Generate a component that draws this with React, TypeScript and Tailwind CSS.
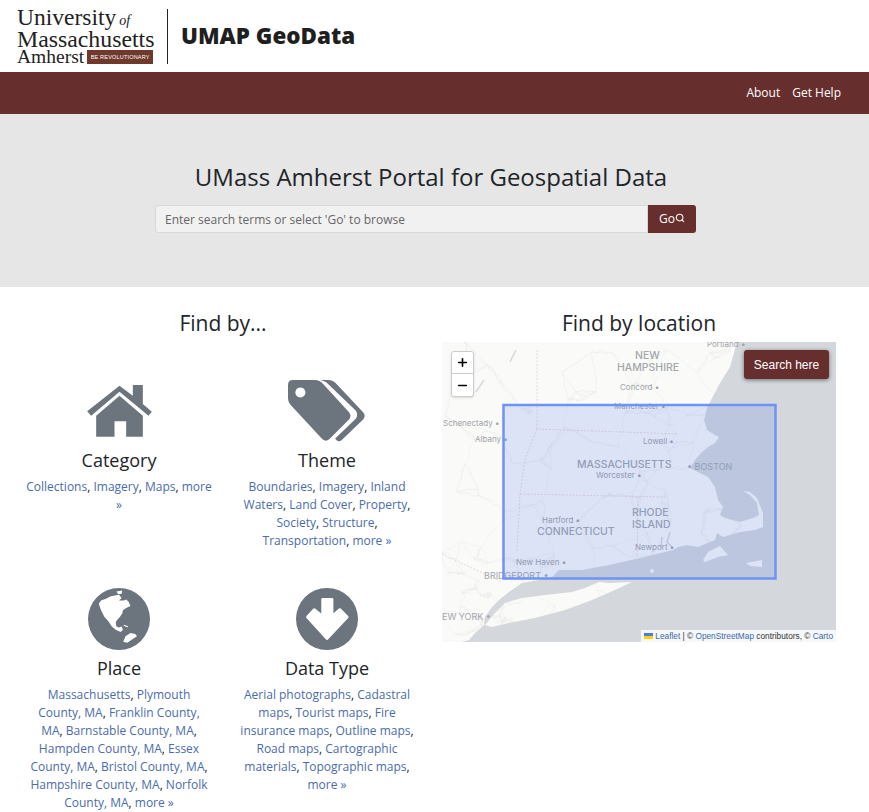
import { Search, Plus, Minus } from 'lucide-react'

const SANS = "font-['Open_Sans',sans-serif]"

const COAST =
  'M0 0H295L288 25 278 41 269 58 265 66 262 78 265 88 273 93 277 95 273 101 266 105 260 110 253 118 248 126 256 130 266 135 273 145 276 158 281 165 278 173 283 176 298 180 311 176 317 173 315 161 308 153 301 149 308 150 315 156 321 171 321 185 313 188 298 190 281 195 275 191 273 198 256 205 245 203 236 205 231 208 198 216 167 223 140 228 117 228 110 235 97 238 80 241 67 250 57 258 50 265 43 275 42 283 33 291 27 298 20 300H0Z'
const LONG_ISLAND =
  'M190 240 167 241 157 240 143 246 130 250 103 253 80 256 63 261 53 271 43 283 50 285 67 281 93 276 123 268 150 258 173 248Z'

// cities the road lines run between, in map coordinates
const HUBS = [
  [248, 126], [197, 135], [135, 180], [225, 175], [110, 222], [33, 98], [160, 155], [225, 65],
  [212, 46], [290, 2], [40, 280], [235, 100], [78, 236], [15, 82], [150, 100], [100, 120],
  [60, 40], [120, 30], [170, 10], [60, 180], [20, 200], [20, 250], [262, 170], [300, 184],
  [190, 215], [90, 70], [255, 30], [15, 150], [60, 280], [110, 262], [155, 248],
]

function buildRoads() {
  let seed = 7
  const rnd = () => {
    seed = (seed * 16807) % 2147483647
    return seed / 2147483647
  }
  const hubs = [...HUBS]
  for (let i = 0; i < 110; i++) hubs.push([Math.round(rnd() * 300), Math.round(rnd() * 300)])
  // new york area is much denser
  for (let i = 0; i < 40; i++) hubs.push([Math.round(rnd() * 90), Math.round(210 + rnd() * 90)])

  const out: string[] = []
  hubs.forEach(([ax, ay], i) => {
    const near = hubs
      .map(([x, y], j) => ({ x, y, j, d: Math.hypot(x - ax, y - ay) }))
      .filter((h) => h.j !== i)
      .sort((a, b) => a.d - b.d)
      .slice(0, 3)
    near.forEach((h) => {
      let d = `M${ax} ${ay}`
      for (let s = 1; s <= 4; s++) {
        const t = s / 4
        const jitter = s === 4 ? 0 : 4
        d += `L${(ax + (h.x - ax) * t + (rnd() - 0.5) * jitter).toFixed(1)} ${(ay + (h.y - ay) * t + (rnd() - 0.5) * jitter).toFixed(1)}`
      }
      out.push(d)
    })
  })
  return out
}

const ROADS = buildRoads()

function HomeIcon() {
  return (
    <svg viewBox="78 48 194 156" className="h-[52px] w-[65px] fill-[#6c757d]">
      <path d="M78 127 175 50 215 80V48h30v57l27 23-10 12-87-72-85 72z" />
      <path d="M175 80 245 140V203H195V157H160V203H105V140z" />
    </svg>
  )
}

function TagsIcon() {
  return (
    <svg viewBox="685 33 233 185" className="h-[62px] w-[78px] fill-[#6c757d]">
      <path
        fillRule="evenodd"
        d="M700 33H765Q780 33 790 45L868 130Q875 140 868 150L808 210Q798 218 788 210L695 110Q685 100 685 85V48Q685 33 700 33ZM722 55a15 15 0 1 0 .01 0Z"
      />
      <path d="M782 33H805Q820 33 830 45L910 130Q918 140 910 150L845 213Q838 218 830 213L826 208 888 148Q895 138 888 125L800 40Q792 35 782 33Z" />
    </svg>
  )
}

function GlobeIcon() {
  return (
    <svg viewBox="5 7 190 190" className="h-[62px] w-[62px]">
      <circle cx="100" cy="102" r="95" className="fill-[#6c757d]" />
      <g className="fill-white">
        <path d="M38 55 45 45 60 40 75 32 100 28 108 38 100 45 115 45 122 42 130 50 135 62 122 68 112 75 110 85 102 97 94 105 90 112 92 125 100 128 108 125 112 135 105 142 90 135 78 125 68 110 55 95 45 75Z" />
        <path d="M113 172 120 155 135 145 150 148 155 155 140 165 125 175Z" />
        <path d="M92 18 110 15 108 25 98 26Z" />
        <path d="M115 120 128 124 126 127 114 123Z" />
      </g>
    </svg>
  )
}

function DownIcon() {
  return (
    <svg viewBox="708 28 184 184" className="h-[62px] w-[62px]">
      <circle cx="800" cy="120" r="92" className="fill-[#6c757d]" />
      <path
        className="fill-white stroke-white"
        strokeWidth="8"
        strokeLinejoin="round"
        d="M787 62H815V112L838 92 860 114 800 178 742 114 762 92 787 112Z"
      />
    </svg>
  )
}

function MapDrawing() {
  const small = 'fill-[#9ea3a8] text-[8px]'
  const mid = 'fill-[#a3a8ad] text-[9px]'
  const big = 'fill-[#a3a8ad] text-[10.5px] font-medium'

  return (
    <svg viewBox="0 0 394 300" className="h-full w-full font-['Inter',sans-serif]">
      <defs>
        <clipPath id="land">
          <path d={COAST} />
          <path d={LONG_ISLAND} />
        </clipPath>
      </defs>
      <rect width="394" height="300" className="fill-[#d4d8dc]" />
      <path className="fill-[#fafaf8]" d={COAST} />
      <path className="fill-[#fafaf8]" d={LONG_ISLAND} />
      <path className="fill-[#fafaf8]" d="M261 218 266 210 278 204 286 213 276 215 263 220Z" />
      <path className="fill-[#fafaf8]" d="M304 221 320 218 320 225 308 224Z" />
      <circle cx="210" cy="229" r="2" className="fill-[#fafaf8]" />
      <g clipPath="url(#land)" className="fill-none stroke-[#ececea]" strokeWidth="0.5">
        {ROADS.map((d) => (
          <path key={d} d={d} />
        ))}
      </g>
      <path
        className="fill-none stroke-[#d4d8dc]"
        strokeWidth="1.5"
        d="M228 190 225 200 230 205M220 195 219 206M68 20 74 8M34 50 42 38"
      />
      <g className="fill-none stroke-[#e7c9c9]" strokeWidth="0.7" strokeDasharray="2 1.5">
        <path d="M95 8 95 87 236 92M95 87 83 117 78 152 75 210M78 152 224 155M196 155 195 215M0 212 60 240" />
      </g>
      <text x="193" y="17" className={big}>NEW</text>
      <text x="175" y="29" className={big}>HAMPSHIRE</text>
      <text x="178" y="48" className={small}>Concord •</text>
      <text x="265" y="5" className={small}>Portland •</text>
      <text x="172" y="67" className={small}>Manchester •</text>
      <text x="1" y="84" className={small}>Schenectady •</text>
      <text x="33" y="100" className={small}>Albany •</text>
      <text x="201" y="102" className={small}>Lowell •</text>
      <text x="135" y="126" className={big}>MASSACHUSETTS</text>
      <text x="154" y="136" className={small}>Worcester •</text>
      <text x="245" y="128" className={mid}>• BOSTON</text>
      <text x="190" y="174" className={big}>RHODE</text>
      <text x="190" y="186" className={big}>ISLAND</text>
      <text x="100" y="181" className={small}>Hartford •</text>
      <text x="95" y="193" className={big}>CONNECTICUT</text>
      <text x="193" y="208" className={small}>Newport •</text>
      <text x="74" y="223" className={small}>New Haven •</text>
      <text x="42" y="237" className={mid}>BRIDGEPORT •</text>
      <text x="0" y="278" className={mid}>EW YORK •</text>
      <rect
        x="61.5"
        y="63"
        width="272"
        height="173.5"
        className="fill-[#3367f1]/15 stroke-[#6d93f5]"
        strokeWidth="2.5"
      />
    </svg>
  )
}

function FindCard({
  icon,
  title,
  links,
}: {
  icon: React.ReactNode
  title: string
  links: string[]
}) {
  return (
    <div className="flex flex-col items-center text-center">
      <div className="flex h-[64px] items-center justify-center">{icon}</div>
      <h3 className="mt-[7px] text-[18px] leading-[21px] text-[#212529]">{title}</h3>
      <p className="mt-[7px] w-[186px] text-[12px] leading-[18px] text-[#212529]">
        {links.map((l, i) => (
          <span key={l}>
            <a href="#" className="text-[#4a6cab]">{l}</a>
            {i < links.length - 1 ? ', ' : ''}
          </span>
        ))}
      </p>
    </div>
  )
}

export default function App() {
  return (
    <div className={`${SANS} h-[812px] overflow-hidden bg-white`}>
      <header className="flex h-[72px] items-center pl-[17px]">
        <div className="flex h-[56px] w-[137px] flex-col font-['Liberation_Serif',serif] text-[#222]">
          <div className="flex items-baseline gap-[3px] text-[23.5px] leading-[19px]">
            University
            <span className="text-[14px] italic">of</span>
          </div>
          <div className="whitespace-nowrap text-[23.8px] leading-[19px]">Massachusetts</div>
          <div className="flex items-center gap-[3px] text-[19.5px] leading-[16px]">
            Amherst
            <span className="flex h-[14px] w-[66px] items-center justify-center bg-[#6f3a2c] font-['Liberation_Sans',sans-serif] text-[5.5px] tracking-[0.2px] text-white">
              BE REVOLUTIONARY
            </span>
          </div>
        </div>
        <div className="ml-[13px] h-[55px] w-px bg-[#222]" />
        <h1 className="ml-[13px] text-[22.4px] font-extrabold text-[#1f1f1f]">UMAP GeoData</h1>
      </header>

      <nav className="flex h-[42px] items-center justify-end gap-[12px] bg-[#672e2e] pr-[28px] text-[12px] text-white">
        <a href="#">About</a>
        <a href="#">Get Help</a>
      </nav>

      <section className="flex h-[173px] flex-col items-center bg-[#e6e6e6] pr-[7px] pt-[46px]">
        <h2 className="text-[24px] leading-[34px] text-[#212529]">
          UMass Amherst Portal for Geospatial Data
        </h2>
        <div className="mr-[11px] mt-[11px] flex h-[28px] w-[541px]">
          <input
            className="h-full flex-1 rounded-l-[3px] border border-[#d8d8d8] bg-[#f1f1f1] px-[9px] text-[12px] text-[#555] placeholder:text-[#666]"
            placeholder="Enter search terms or select 'Go' to browse"
            readOnly
          />
          <button className="flex w-[48px] items-start justify-center rounded-r-[3px] bg-[#672e2e] pt-[5px] text-[12px] text-white">
            Go
            <Search className="mt-[3px] h-[10px] w-[10px]" strokeWidth={2.5} />
          </button>
        </div>
      </section>

      <main className="flex pl-[15px] pt-[21px]">
        <div className="w-[416px]">
          <h2 className="text-center text-[21px] leading-[30px] text-[#212529]">Find by...</h2>
          <div className="mt-[41px] grid grid-cols-2 gap-y-[37px]">
            <FindCard
              icon={<HomeIcon />}
              title="Category"
              links={['Collections', 'Imagery', 'Maps', 'more »']}
            />
            <FindCard
              icon={<TagsIcon />}
              title="Theme"
              links={[
                'Boundaries',
                'Imagery',
                'Inland Waters',
                'Land Cover',
                'Property',
                'Society',
                'Structure',
                'Transportation',
                'more »',
              ]}
            />
            <FindCard
              icon={<GlobeIcon />}
              title="Place"
              links={[
                'Massachusetts',
                'Plymouth County, MA',
                'Franklin County, MA',
                'Barnstable County, MA',
                'Hampden County, MA',
                'Essex County, MA',
                'Bristol County, MA',
                'Hampshire County, MA',
                'Norfolk County, MA',
                'more »',
              ]}
            />
            <FindCard
              icon={<DownIcon />}
              title="Data Type"
              links={[
                'Aerial photographs',
                'Cadastral maps',
                'Tourist maps',
                'Fire insurance maps',
                'Outline maps',
                'Road maps',
                'Cartographic materials',
                'Topographic maps',
                'more »',
              ]}
            />
          </div>
        </div>

        <div className="ml-[11px] w-[394px]">
          <h2 className="mb-[4px] text-center text-[21px] leading-[30px] text-[#212529]">
            Find by location
          </h2>
          <div className="relative h-[300px] w-[394px] overflow-hidden">
            <MapDrawing />
            <div className="absolute left-[9px] top-[9px] flex w-[23px] flex-col overflow-hidden rounded-[3px] border border-[#ccc] bg-white text-black shadow-sm">
              <div className="flex h-[22px] items-center justify-center border-b border-[#ccc]">
                <Plus className="h-[13px] w-[13px]" strokeWidth={3} />
              </div>
              <div className="flex h-[22px] items-center justify-center">
                <Minus className="h-[13px] w-[13px]" strokeWidth={3} />
              </div>
            </div>
            <div className="absolute right-[7px] top-[8px] flex h-[29px] w-[85px] items-center justify-center rounded-[3px] bg-[#672e2e] font-['Liberation_Sans',sans-serif] text-[12px] text-white shadow-[0_1px_4px_rgba(0,0,0,0.5)]">
              Search here
            </div>
            <div className="absolute bottom-0 right-0 flex h-[12px] items-center gap-[2px] bg-white/80 px-[3px] font-['Liberation_Sans',sans-serif] text-[8.3px] text-[#333]">
              <svg viewBox="0 0 12 8" className="h-[6px] w-[9px]">
                <rect width="12" height="4" className="fill-[#4c7be1]" />
                <rect y="4" width="12" height="4" className="fill-[#ffd500]" />
              </svg>
              <span className="whitespace-nowrap">
                <a href="#" className="text-[#3b6aa8]">Leaflet</a> | © <a href="#" className="text-[#3b6aa8]">OpenStreetMap</a> contributors, © <a href="#" className="text-[#3b6aa8]">Carto</a>
              </span>
            </div>
          </div>
        </div>
      </main>
    </div>
  )
}
